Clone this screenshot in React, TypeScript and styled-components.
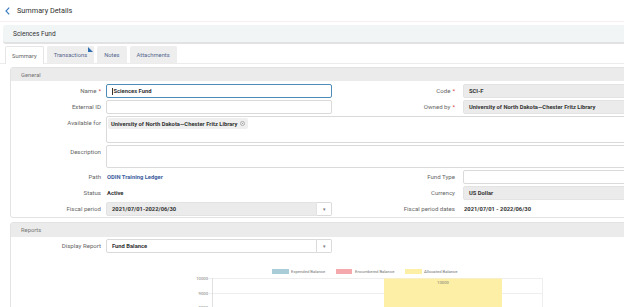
import styled, { createGlobalStyle } from "styled-components";

const GlobalStyle = createGlobalStyle`
  html, body {
    margin: 0;
    padding: 0;
    background: #fff;
    overflow: hidden;
  }
  body {
    font-family: Roboto, "Liberation Sans", Arial, sans-serif;
    color: #333;
  }
`;

const App = () => {
  return (
    <Page>
      <GlobalStyle />
      <TopBar>
        <svg width="5" height="8" viewBox="0 0 5 8">
          <path d="M4.2 0.6 L1 4 L4.2 7.4" fill="none" stroke="#3b7cc4" strokeWidth="1.2" />
        </svg>
        <PageTitle>Summary Details</PageTitle>
      </TopBar>

      <FundBar>Sciences Fund</FundBar>

      <TabRow>
        <Tab $active>Summary</Tab>
        <Tab>
          Transactions
          <Marker width="5" height="5" viewBox="0 0 5 5">
            <path d="M0 0 L5 5 L0 5 Z" fill="#2f6fb3" />
          </Marker>
        </Tab>
        <Tab>Notes</Tab>
        <Tab>Attachments</Tab>
      </TabRow>

      <Content>
        <Section>
          <SectionHeader>General</SectionHeader>
          <FormGrid>
            <Label>
              Name<Required>*</Required>
            </Label>
            <Field $focus>
              <Caret />
              Sciences Fund
            </Field>
            <Label $right>
              Code<Required>*</Required>
            </Label>
            <Field $readonly>SCI-F</Field>

            <Label>External ID</Label>
            <Field />
            <Label $right>
              Owned by<Required>*</Required>
            </Label>
            <Field $readonly>University of North Dakota—Chester Fritz Library</Field>

            <Label>Available for</Label>
            <TextBox>
              <Chip>
                University of North Dakota—Chester Fritz Library
                <svg width="5" height="5" viewBox="0 0 10 10">
                  <circle cx="5" cy="5" r="4.2" fill="none" stroke="#888" strokeWidth="1.1" />
                  <path d="M3.4 3.4 L6.6 6.6 M6.6 3.4 L3.4 6.6" stroke="#888" strokeWidth="1.1" />
                </svg>
              </Chip>
            </TextBox>

            <Label>Description</Label>
            <TextBox />

            <Label>Path</Label>
            <Value $link>ODIN Training Ledger</Value>
            <Label $right>Fund Type</Label>
            <Field />

            <Label>Status</Label>
            <Value>Active</Value>
            <Label $right>Currency</Label>
            <Field $readonly>US Dollar</Field>

            <Label>Fiscal period</Label>
            <SelectWrap>
              <SelectBox $readonly>2021/07/01-2022/06/30</SelectBox>
              <ArrowButton>▾</ArrowButton>
            </SelectWrap>
            <Label $right>Fiscal period dates</Label>
            <Value>2021/07/01 - 2022/06/30</Value>
          </FormGrid>
        </Section>

        <Section>
          <SectionHeader $tall>Reports</SectionHeader>
          <ReportRow>
            <Label>Display Report</Label>
            <SelectWrap>
              <SelectBox>Fund Balance</SelectBox>
              <ArrowButton>▾</ArrowButton>
            </SelectWrap>
          </ReportRow>

          <Chart width="400" height="60" viewBox="0 0 400 60">
            <rect x="92" y="6" width="17" height="5" fill="#a9ccd9" />
            <ChartText x="111" y="10.4">Expended Balance</ChartText>
            <rect x="156" y="6" width="16" height="5" fill="#f6a9ad" />
            <ChartText x="175" y="10.4">Encumbered Balance</ChartText>
            <rect x="225" y="6" width="17" height="5" fill="#fdf0a6" />
            <ChartText x="244" y="10.4">Allocated Balance</ChartText>

            <line x1="29" y1="15.5" x2="362" y2="15.5" stroke="#eaeaea" strokeWidth="0.8" />
            <line x1="29" y1="30.5" x2="362" y2="30.5" stroke="#eaeaea" strokeWidth="0.8" />
            <line x1="29" y1="45.5" x2="362" y2="45.5" stroke="#eaeaea" strokeWidth="0.8" />
            <rect x="204" y="15.5" width="118" height="50" fill="#fdf0a6" />
            <line x1="32.5" y1="15" x2="32.5" y2="60" stroke="#d8d8d8" strokeWidth="0.8" />
            <line x1="362.5" y1="15" x2="362.5" y2="60" stroke="#eaeaea" strokeWidth="0.8" />

            <ChartText x="28" y="16.8" textAnchor="end">10000</ChartText>
            <ChartText x="28" y="31.8" textAnchor="end">9000</ChartText>
            <ChartText x="28" y="45.6" textAnchor="end">8000</ChartText>
            <ChartText x="263" y="21" textAnchor="middle" fill="#555">10000</ChartText>
          </Chart>
        </Section>
      </Content>
    </Page>
  );
};

const Page = styled.div`
  width: 800px;
  height: 307px;
  overflow: hidden;
`;

const TopBar = styled.div`
  height: 21px;
  display: flex;
  align-items: center;
  gap: 7px;
  padding-left: 5px;
  border-bottom: 1px solid #f5efef;
`;

const PageTitle = styled.span`
  font-size: 7.3px;
  color: #333;
`;

const FundBar = styled.div`
  height: 17px;
  margin: 3px 0 0 3px;
  padding-left: 10px;
  display: flex;
  align-items: center;
  background: #f1f5f6;
  border-bottom: 2px solid #e2e2e2;
  border-radius: 3px 0 0 3px;
  font-size: 6.6px;
  color: #333;
`;

const TabRow = styled.div`
  height: 17px;
  margin-top: 2px;
  padding-left: 5px;
  display: flex;
  gap: 3px;
  border-bottom: 1px solid #ececec;
`;

const Tab = styled.div<{ $active?: boolean }>`
  position: relative;
  box-sizing: border-box;
  padding: 0 6px;
  display: flex;
  align-items: center;
  font-size: 5.8px;
  color: ${(p) => (p.$active ? "#666" : "#55688f")};
  background: ${(p) => (p.$active ? "#fff" : "#eeeeee")};
  border: 1px solid ${(p) => (p.$active ? "#e6e6e6" : "#eeeeee")};
  border-bottom: none;
  border-radius: 2px 2px 0 0;
  margin-bottom: ${(p) => (p.$active ? "-1px" : "0")};
  height: ${(p) => (p.$active ? "18px" : "17px")};
`;

const Marker = styled.svg`
  position: absolute;
  top: 0;
  right: 0;
`;

const Content = styled.div`
  padding: 3px 0 0 10px;
`;

const Section = styled.div`
  border: 1px solid #e2e2e2;
  border-radius: 3px;
  background: #fff;

  & + & {
    margin-top: 4px;
  }
`;

const SectionHeader = styled.div<{ $tall?: boolean }>`
  height: ${(p) => (p.$tall ? "14px" : "13px")};
  padding-left: 10px;
  display: flex;
  align-items: center;
  background: #ebebeb;
  font-size: 5.8px;
  color: #777;
`;

const FormGrid = styled.div`
  display: grid;
  grid-template-columns: 95px 226px 131px 320px;
  grid-template-rows: 14px 14px 27px 23px 14px 14px 14px;
  row-gap: 2px;
  padding: 3px 0 1px;
`;

const Label = styled.div<{ $right?: boolean }>`
  text-align: right;
  padding-right: ${(p) => (p.$right ? "8px" : "5px")};
  font-size: 6.1px;
  line-height: 14px;
  color: #666;
  white-space: nowrap;
`;

const Required = styled.span`
  color: #d3373b;
  margin-left: 2px;
`;

const Field = styled.div<{ $focus?: boolean; $readonly?: boolean }>`
  height: 14px;
  box-sizing: border-box;
  padding-left: 5px;
  display: flex;
  align-items: center;
  border: 1px solid ${(p) => (p.$focus ? "#4d8cb8" : p.$readonly ? "#e3e3e3" : "#dadada")};
  border-radius: 2px;
  background: ${(p) => (p.$readonly ? "#ebebeb" : "#fff")};
  font-size: 5.8px;
  font-weight: 700;
  color: #333;
  white-space: nowrap;
`;

const Caret = styled.span`
  width: 0;
  height: 7px;
  border-left: 1px solid #333;
  margin-right: 0.5px;
`;

const TextBox = styled.div`
  grid-column: 2 / -1;
  box-sizing: border-box;
  display: flex;
  align-items: flex-start;
  padding: 1px;
  border: 1px solid #dadada;
  border-radius: 2px;
`;

const Chip = styled.span`
  display: inline-flex;
  align-items: center;
  gap: 3px;
  height: 11px;
  padding: 0 3px;
  background: #efefef;
  border-radius: 2px;
  font-size: 5.8px;
  font-weight: 700;
  color: #333;
`;

const Value = styled.div<{ $link?: boolean }>`
  padding-left: 1px;
  font-size: 5.8px;
  font-weight: 700;
  line-height: 14px;
  color: ${(p) => (p.$link ? "#3d5d9e" : "#333")};
  white-space: nowrap;
`;

const SelectWrap = styled.div`
  display: flex;
  height: 14px;
`;

const SelectBox = styled(Field)`
  flex: 1;
  border-radius: 2px 0 0 2px;
`;

const ArrowButton = styled.div`
  width: 15px;
  box-sizing: border-box;
  display: flex;
  align-items: center;
  justify-content: center;
  border: 1px solid #dadada;
  border-left: none;
  border-radius: 0 2px 2px 0;
  background: #fff;
  font-size: 5px;
  color: #777;
`;

const ReportRow = styled.div`
  display: grid;
  grid-template-columns: 95px 226px;
  padding-top: 2px;
`;

const Chart = styled.svg`
  display: block;
  margin: 10px 0 0 169px;
`;

const ChartText = styled.text`
  font-family: Roboto, "Liberation Sans", Arial, sans-serif;
  font-size: 4.2px;
  fill: #777;
`;

export default App;
